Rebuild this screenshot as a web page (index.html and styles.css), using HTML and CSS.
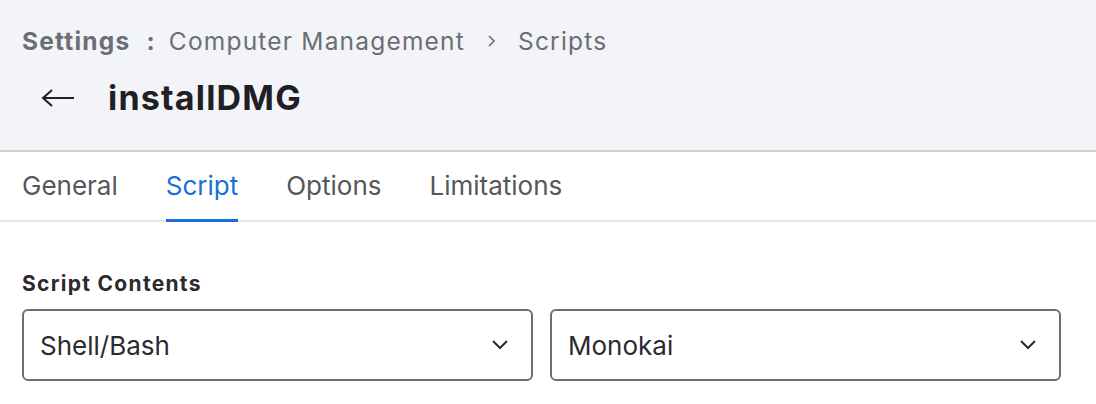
FILE: index.html
```html
<!DOCTYPE html>
<html>
<head>
<meta charset="utf-8">
<link rel="stylesheet" href="styles.css">
</head>
<body>
<header class="page-header">
  <nav class="crumbs">
    <span class="crumb-root">Settings</span>
    <span class="crumb-colon">:</span>
    <span class="crumb">Computer Management</span>
    <svg class="crumb-sep" width="12" height="14" viewBox="0 0 12 14"><path d="M3 2 L8 7 L3 12" fill="none" stroke="#6b6e75" stroke-width="1.6"/></svg>
    <span class="crumb">Scripts</span>
  </nav>
  <div class="title-row">
    <svg class="back" width="36" height="20" viewBox="0 0 36 20"><path d="M34 10 H3 M12 2 L3 10 L12 18" fill="none" stroke="#1f2024" stroke-width="2"/></svg>
    <h1 class="title">installDMG</h1>
  </div>
</header>
<div class="tabs">
  <span class="tab">General</span>
  <span class="tab active">Script</span>
  <span class="tab">Options</span>
  <span class="tab">Limitations</span>
</div>
<section class="content">
  <div class="label">Script Contents</div>
  <div class="selects">
    <div class="select"><span>Shell/Bash</span><svg width="18" height="12" viewBox="0 0 18 12"><path d="M2 2 L9 9 L16 2" fill="none" stroke="#2a2b2f" stroke-width="2"/></svg></div>
    <div class="select"><span>Monokai</span><svg width="18" height="12" viewBox="0 0 18 12"><path d="M2 2 L9 9 L16 2" fill="none" stroke="#2a2b2f" stroke-width="2"/></svg></div>
  </div>
</section>
</body>
</html>
```
FILE: styles.css
```css
* { box-sizing: border-box; }
body {
  margin: 0;
  font-family: Inter, "Open Sans", sans-serif;
  background: #fff;
  color: #2a2b2f;
}
.page-header {
  background: #f3f4f8;
  height: 152px;
  border-bottom: 2px solid #cfd2d7;
  padding: 23px 22px 0;
}
.crumbs {
  display: flex;
  align-items: center;
  height: 36px;
  font-size: 24.5px;
  letter-spacing: 1.2px;
  color: #6b6e75;
}
.crumb-root { font-weight: 700; }
.crumb-colon { font-weight: 700; margin: 0 13px 0 16px; }
.crumb-sep { margin: 0 20px 0 21px; }
.title-row {
  display: flex;
  align-items: center;
  margin-top: 19px;
  padding-left: 18px;
}
.back { margin-right: 32px; }
.title {
  margin: 0;
  font-size: 34px;
  letter-spacing: 1.2px;
  font-weight: 700;
  color: #1f2024;
  line-height: 40px;
}
.tabs {
  display: flex;
  gap: 48px;
  padding: 0 22px;
  border-bottom: 2px solid #e6e7ea;
  height: 70px;
}
.tab {
  font-size: 26px;
  color: #55575d;
  display: flex;
  align-items: center;
  border-bottom: 3px solid transparent;
  margin-bottom: -2px;
}
.tab.active { color: #1a6fd6; border-bottom-color: #1a6fd6; }
.content { padding: 49px 22px 0; }
.label {
  font-size: 21px;
  letter-spacing: 1.3px;
  font-weight: 700;
  color: #2a2b2f;
  line-height: 26px;
}
.selects {
  display: flex;
  gap: 17px;
  margin-top: 12px;
}
.select {
  width: 511px;
  height: 72px;
  border: 2px solid #6d6f75;
  border-radius: 6px;
  display: flex;
  align-items: center;
  justify-content: space-between;
  padding: 0 22px 0 16px;
  font-size: 26px;
  color: #2a2b2f;
}
```
